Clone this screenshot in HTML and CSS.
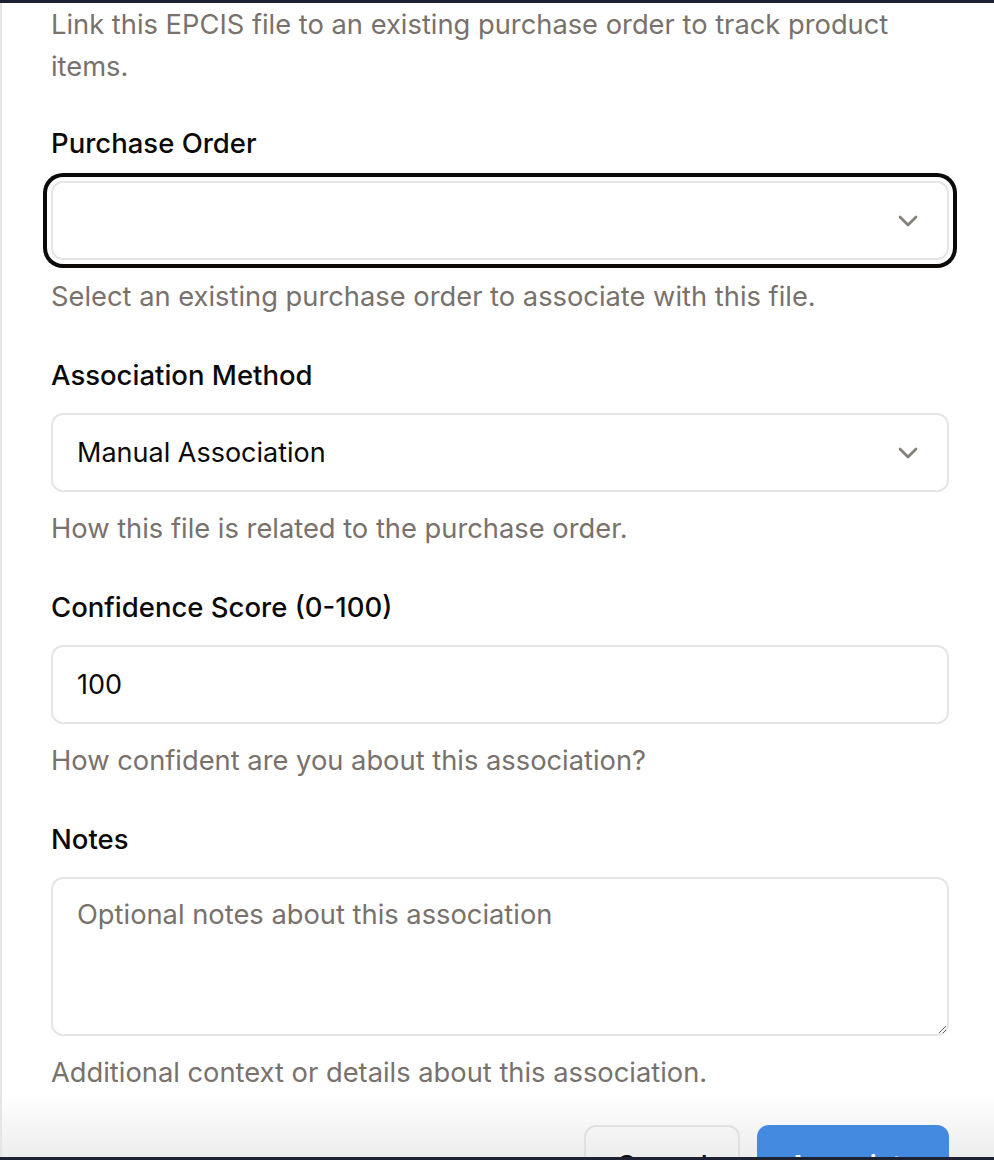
FILE: index.html
```html
<!DOCTYPE html>
<html lang="en">
<head>
<meta charset="utf-8">
<title>Associate Purchase Order</title>
<link rel="stylesheet" href="styles.css">
</head>
<body>
<div class="topbar"></div>
<main class="sheet">
  <p class="intro">Link this EPCIS file to an existing purchase order to track product items.</p>
  <form class="form">
    <div class="field">
      <label class="label">Purchase Order</label>
      <button type="button" class="control select focused">
        <span class="value"></span>
        <svg class="chev" viewBox="0 0 24 24" width="32" height="32" fill="none" stroke="currentColor" stroke-width="2" stroke-linecap="round" stroke-linejoin="round"><path d="m6 9 6 6 6-6"/></svg>
      </button>
      <p class="help">Select an existing purchase order to associate with this file.</p>
    </div>
    <div class="field">
      <label class="label">Association Method</label>
      <button type="button" class="control select">
        <span class="value">Manual Association</span>
        <svg class="chev" viewBox="0 0 24 24" width="32" height="32" fill="none" stroke="currentColor" stroke-width="2" stroke-linecap="round" stroke-linejoin="round"><path d="m6 9 6 6 6-6"/></svg>
      </button>
      <p class="help">How this file is related to the purchase order.</p>
    </div>
    <div class="field">
      <label class="label">Confidence Score (0-100)</label>
      <input class="control input" type="text" value="100">
      <p class="help">How confident are you about this association?</p>
    </div>
    <div class="field">
      <label class="label">Notes</label>
      <textarea class="control textarea" placeholder="Optional notes about this association"></textarea>
      <p class="help">Additional context or details about this association.</p>
    </div>
  </form>
  <div class="footer">
    <button type="button" class="btn btn-outline">Cancel</button>
    <button type="button" class="btn btn-primary">Associate</button>
  </div>
</main>
<div class="bottombar"></div>
</body>
</html>
```

FILE: styles.css
```css
* { box-sizing: border-box; }
html, body { margin: 0; padding: 0; }
body {
  width: 994px;
  height: 1160px;
  overflow: hidden;
  display: flex;
  flex-direction: column;
  background: #fff;
  font-family: Inter, "Noto Sans", "Liberation Sans", sans-serif;
  color: #0c0a09;
}
.topbar { height: 3px; background: #1c2231; flex: none; }
.bottombar { height: 3px; background: #1c2231; flex: none; }
.sheet {
  flex: 1;
  overflow: hidden;
  border-left: 2px solid #e7e5e4;
  padding: 1px 45px 0 49px;
  display: flex;
  flex-direction: column;
}
.intro {
  margin: 0;
  font-size: 27.3px;
  line-height: 42px;
  color: #78716c;
}
.form {
  margin-top: 35px;
  display: flex;
  flex-direction: column;
  gap: 38px;
}
.field { display: flex; flex-direction: column; }
.label {
  font-size: 27.5px;
  line-height: 40px;
  font-weight: 500;
  margin-bottom: 18px;
  color: #0c0a09;
}
.control {
  width: 100%;
  height: 79px;
  border: 2px solid #e7e5e4;
  border-radius: 12px;
  background: #fff;
  font-family: inherit;
  font-size: 27px;
  color: #0c0a09;
  padding: 0 24px;
  margin: 0;
  outline: none;
}
.select {
  display: flex;
  align-items: center;
  justify-content: space-between;
  text-align: left;
  padding-right: 23px;
}
.select .value { flex: 1; }
.chev { color: #85807c; flex: none; }
.focused {
  box-shadow: 0 0 0 4px #fff, 0 0 0 8px #0c0a09;
}
.textarea {
  height: 159px;
  padding: 16px 24px;
  line-height: 40px;
  font-size: 27.3px;
  resize: vertical;
  display: block;
}
.textarea::placeholder { color: #78716c; opacity: 1; }
.help {
  margin: 17px 0 0;
  font-size: 27.3px;
  line-height: 40px;
  color: #78716c;
}
.footer {
  flex: none;
  display: flex;
  justify-content: flex-end;
  gap: 17px;
  padding-top: 32px;
  margin: 0 -45px 0 -49px;
  padding-right: 45px;
  background: linear-gradient(to bottom, #ffffff 0, #ededed 64px, #e0e0e0 150px);
}
.btn {
  height: 80px;
  border-radius: 12px;
  font-family: inherit;
  font-size: 27.5px;
  font-weight: 500;
  padding: 0 30px;
  flex: none;
}
.btn-outline {
  width: 156px;
  border: 2px solid #e2e0df;
  background: transparent;
  color: #0c0a09;
}
.btn-primary {
  width: 192px;
  border: none;
  background: #458ae1;
  color: #fff;
}
```
